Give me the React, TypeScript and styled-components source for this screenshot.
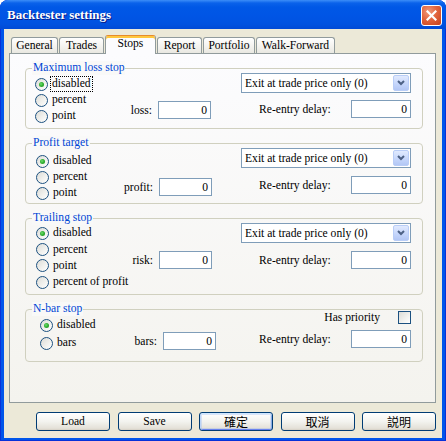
import React from "react";
import styled, { createGlobalStyle, css } from "styled-components";

const Global = createGlobalStyle`
  html, body { margin: 0; padding: 0; background: #ffffff; }
  body {
    font-family: "Liberation Serif", Tinos, "Times New Roman", "DejaVu Serif", serif;
    font-size: 11.6px;
    color: #000;
  }
  * { box-sizing: border-box; }
`;

const Window = styled.div`
  width: 446px;
  height: 441px;
  display: flex;
  flex-direction: column;
  background: #0055ea;
  border-radius: 8px 8px 0 0;
  box-shadow: inset 0 0 0 1px #0831d9;
  overflow: hidden;
`;

const TitleBar = styled.div`
  height: 29px;
  flex: none;
  display: flex;
  align-items: center;
  justify-content: space-between;
  padding: 0 4px 0 7px;
  background: linear-gradient(
    #3c8ef8 0px,
    #0a62ea 3px,
    #0058e6 7px,
    #0055e5 16px,
    #0052e0 24px,
    #004ad6 29px
  );
`;

const Title = styled.span`
  color: #ffffff;
  font-weight: bold;
  font-size: 13px;
  text-shadow: 1px 1px 0 #0a1883;
  padding-top: 1px;
`;

const CloseButton = styled.div`
  width: 21px;
  height: 21px;
  border: 1px solid #ffffff;
  border-radius: 3px;
  background: radial-gradient(circle at 35% 30%, #f09a7c 0, #e2653e 45%, #c6401c 100%);
  display: flex;
  align-items: center;
  justify-content: center;
  margin-top: 1px;
`;

const Client = styled.div`
  flex: 1;
  margin: 0 4px 3px 4px;
  background: #ece9d8;
  display: flex;
  flex-direction: column;
  padding: 6px 6px 0 5px;
`;

const TabStrip = styled.div`
  display: flex;
  align-items: flex-end;
  gap: 1px;
  padding-left: 2px;
  height: 18px;
  position: relative;
  z-index: 1;
`;

const Tab = styled.div<{ $w: number; $active?: boolean }>`
  width: ${(p) => p.$w}px;
  height: 16px;
  border: 1px solid #919b9c;
  border-bottom: none;
  border-radius: 3px 3px 0 0;
  background: linear-gradient(#ffffff, #f4f3ef 55%, #e9e8e1);
  display: flex;
  align-items: center;
  justify-content: center;
  line-height: 14px;
  padding-top: 1px;
  ${(p) =>
    p.$active &&
    css`
      height: 19px;
      margin-bottom: -1px;
      border-top: 1px solid #e68b2c;
      background: #fcfcfe;
      box-shadow: inset 0 2px 0 #ffc73c;
      padding-top: 0;
      padding-bottom: 3px;
    `}
`;

const Panel = styled.div`
  height: 350px;
  flex: none;
  border: 1px solid #919b9c;
  background: linear-gradient(#fcfcfe, #f4f3ee);
  padding: 14px 12px 0 15px;
  display: flex;
  flex-direction: column;
  gap: 14px;
`;

const Group = styled.div<{ $h: number; $pt: number }>`
  position: relative;
  height: ${(p) => p.$h}px;
  border: 1px solid #d0d0bf;
  border-radius: 4px;
  padding: ${(p) => p.$pt}px 11px 0 0;
  display: flex;
  align-items: flex-start;
`;

const Legend = styled.span`
  position: absolute;
  top: -8px;
  left: 6px;
  padding: 0 1px;
  line-height: 14px;
  color: #0046d5;
  background: #f9f9f8;
`;

const RadioCol = styled.div<{ $indent: number; $top: number }>`
  width: 100px;
  flex: none;
  padding-left: ${(p) => p.$indent}px;
  margin-top: ${(p) => p.$top}px;
  display: flex;
  flex-direction: column;
`;

const RadioRow = styled.div<{ $h: number }>`
  height: ${(p) => p.$h}px;
  display: flex;
  align-items: center;
  white-space: nowrap;
`;

const RadioCircle = styled.span<{ $on?: boolean }>`
  position: relative;
  flex: none;
  width: 13px;
  height: 13px;
  border-radius: 50%;
  border: 1px solid #1c5180;
  background: linear-gradient(135deg, #dcdcd7 0%, #f2f2ef 60%, #ffffff 100%);
  margin-right: 3px;
  ${(p) =>
    p.$on &&
    css`
      &::after {
        content: "";
        position: absolute;
        left: 3px;
        top: 3px;
        width: 5px;
        height: 5px;
        border-radius: 50%;
        background: radial-gradient(circle at 40% 40%, #6fdc6f 0, #2fae2f 50%, #1e8f1e 100%);
      }
    `}
`;

const OptionLabel = styled.span<{ $focus?: boolean }>`
  padding: 0 1px;
  line-height: 14px;
  outline: ${(p) => (p.$focus ? "1px dotted #000" : "none")};
`;

const Field = styled.div<{ $w: number; $top: number }>`
  width: ${(p) => p.$w}px;
  flex: none;
  margin-top: ${(p) => p.$top}px;
  display: flex;
  align-items: center;
  justify-content: flex-end;
  gap: 6px;
  white-space: nowrap;
`;

const TextBox = styled.div<{ $w: number }>`
  width: ${(p) => p.$w}px;
  height: 18px;
  flex: none;
  border: 1px solid #7f9db9;
  background: #ffffff;
  display: flex;
  align-items: center;
  justify-content: flex-end;
  padding-right: 3px;
`;

const Spacer = styled.div`
  flex: 1;
`;

const RightCol = styled.div<{ $gap: number }>`
  width: 170px;
  flex: none;
  display: flex;
  flex-direction: column;
  gap: ${(p) => p.$gap}px;
`;

const Select = styled.div`
  height: 20px;
  border: 1px solid #7f9db9;
  background: #ffffff;
  display: flex;
  align-items: center;
  justify-content: space-between;
  padding: 1px 1px 1px 3px;
  white-space: nowrap;
`;

const SelectArrow = styled.div`
  width: 16px;
  height: 16px;
  border: 1px solid #b9cdf7;
  border-radius: 2px;
  background: linear-gradient(#e1eafe, #c4d5fb 60%, #b3c7f5);
  display: flex;
  align-items: center;
  justify-content: center;
`;

const LabeledRow = styled.div`
  display: flex;
  align-items: center;
  justify-content: space-between;
  padding-left: 18px;
`;

const PriorityRow = styled.div`
  height: 13px;
  display: flex;
  align-items: center;
  justify-content: flex-end;
  gap: 18px;
`;

const CheckBox = styled.span`
  width: 13px;
  height: 13px;
  border: 1px solid #1c5180;
  background: linear-gradient(135deg, #dcdcd7 0%, #f2f2ef 60%, #ffffff 100%);
`;

const ButtonRow = styled.div`
  display: flex;
  justify-content: flex-end;
  gap: 7.5px;
  margin-top: 9px;
`;

const Button = styled.div<{ $default?: boolean }>`
  width: 74px;
  height: 19px;
  border: 1px solid #003c74;
  border-radius: 3px;
  background: linear-gradient(#ffffff, #f3f3ef 50%, #e4e1d8 90%, #d6d0c5);
  display: flex;
  align-items: center;
  justify-content: center;
  line-height: 14px;
  ${(p) =>
    p.$default &&
    css`
      box-shadow: inset 0 1px 0 #cee7ff, inset 1px 0 0 #bcd4f6, inset -1px 0 0 #89ade4,
        inset 0 -1px 0 #6982ee, inset 0 0 0 2px rgba(150, 180, 240, 0.35);
    `}
`;

const CjkText = styled.span`
  font-family: "Noto Sans CJK TC", "Noto Sans CJK JP", sans-serif;
  font-size: 12px;
`;

const Chevron = () => (
  <svg width="8" height="6" viewBox="0 0 8 6">
    <path d="M1 1 L4 4 L7 1" fill="none" stroke="#4d6185" strokeWidth="2" />
  </svg>
);

const CloseX = () => (
  <svg width="11" height="11" viewBox="0 0 11 11">
    <path d="M1.5 1.5 L9.5 9.5 M9.5 1.5 L1.5 9.5" stroke="#ffffff" strokeWidth="2.2" strokeLinecap="square" />
  </svg>
);

type GroupDef = {
  title: string;
  h: number;
  pt: number;
  indent: number;
  radioTop: number;
  rowH: number;
  options: string[];
  field: string;
  midW: number;
  midTop: number;
  gap: number;
  nbar?: boolean;
};

const groups: GroupDef[] = [
  {
    title: "Maximum loss stop",
    h: 61,
    pt: 4,
    indent: 9,
    radioTop: 3,
    rowH: 16,
    options: ["disabled", "percent", "point"],
    field: "loss:",
    midW: 85,
    midTop: 28,
    gap: 7,
  },
  {
    title: "Profit target",
    h: 61,
    pt: 4,
    indent: 10,
    radioTop: 5,
    rowH: 16,
    options: ["disabled", "percent", "point"],
    field: "profit:",
    midW: 86,
    midTop: 30,
    gap: 8,
  },
  {
    title: "Trailing stop",
    h: 77,
    pt: 4,
    indent: 10,
    radioTop: 2,
    rowH: 16.4,
    options: ["disabled", "percent", "point", "percent of profit"],
    field: "risk:",
    midW: 86,
    midTop: 28,
    gap: 8,
  },
  {
    title: "N-bar stop",
    h: 53,
    pt: 1,
    indent: 14,
    radioTop: 5,
    rowH: 18,
    options: ["disabled", "bars"],
    field: "bars:",
    midW: 90,
    midTop: 21,
    gap: 6,
    nbar: true,
  },
];

const tabs = [
  { label: "General", w: 47 },
  { label: "Trades", w: 45 },
  { label: "Stops", w: 51, active: true },
  { label: "Report", w: 45 },
  { label: "Portfolio", w: 52 },
  { label: "Walk-Forward", w: 79 },
];

export default function App() {
  return (
    <>
      <Global />
      <Window>
        <TitleBar>
          <Title>Backtester settings</Title>
          <CloseButton>
            <CloseX />
          </CloseButton>
        </TitleBar>
        <Client>
          <TabStrip>
            {tabs.map((t) => (
              <Tab key={t.label} $w={t.w} $active={t.active}>
                {t.label}
              </Tab>
            ))}
          </TabStrip>
          <Panel>
            {groups.map((g, gi) => (
              <Group key={g.title} $h={g.h} $pt={g.pt}>
                <Legend>{g.title}</Legend>
                <RadioCol $indent={g.indent} $top={g.radioTop}>
                  {g.options.map((o, i) => (
                    <RadioRow key={o} $h={g.rowH}>
                      <RadioCircle $on={i === 0} />
                      <OptionLabel $focus={gi === 0 && i === 0}>{o}</OptionLabel>
                    </RadioRow>
                  ))}
                </RadioCol>
                <Field $w={g.midW} $top={g.midTop}>
                  <span>{g.field}</span>
                  <TextBox $w={53}>0</TextBox>
                </Field>
                <Spacer />
                <RightCol $gap={g.gap}>
                  {g.nbar ? (
                    <PriorityRow>
                      <span>Has priority</span>
                      <CheckBox />
                    </PriorityRow>
                  ) : (
                    <Select>
                      <span>Exit at trade price only (0)</span>
                      <SelectArrow>
                        <Chevron />
                      </SelectArrow>
                    </Select>
                  )}
                  <LabeledRow>
                    <span>Re-entry delay:</span>
                    <TextBox $w={60}>0</TextBox>
                  </LabeledRow>
                </RightCol>
              </Group>
            ))}
          </Panel>
          <ButtonRow>
            <Button>Load</Button>
            <Button>Save</Button>
            <Button $default>
              <CjkText>確定</CjkText>
            </Button>
            <Button>
              <CjkText>取消</CjkText>
            </Button>
            <Button>
              <CjkText>説明</CjkText>
            </Button>
          </ButtonRow>
        </Client>
      </Window>
    </>
  );
}
